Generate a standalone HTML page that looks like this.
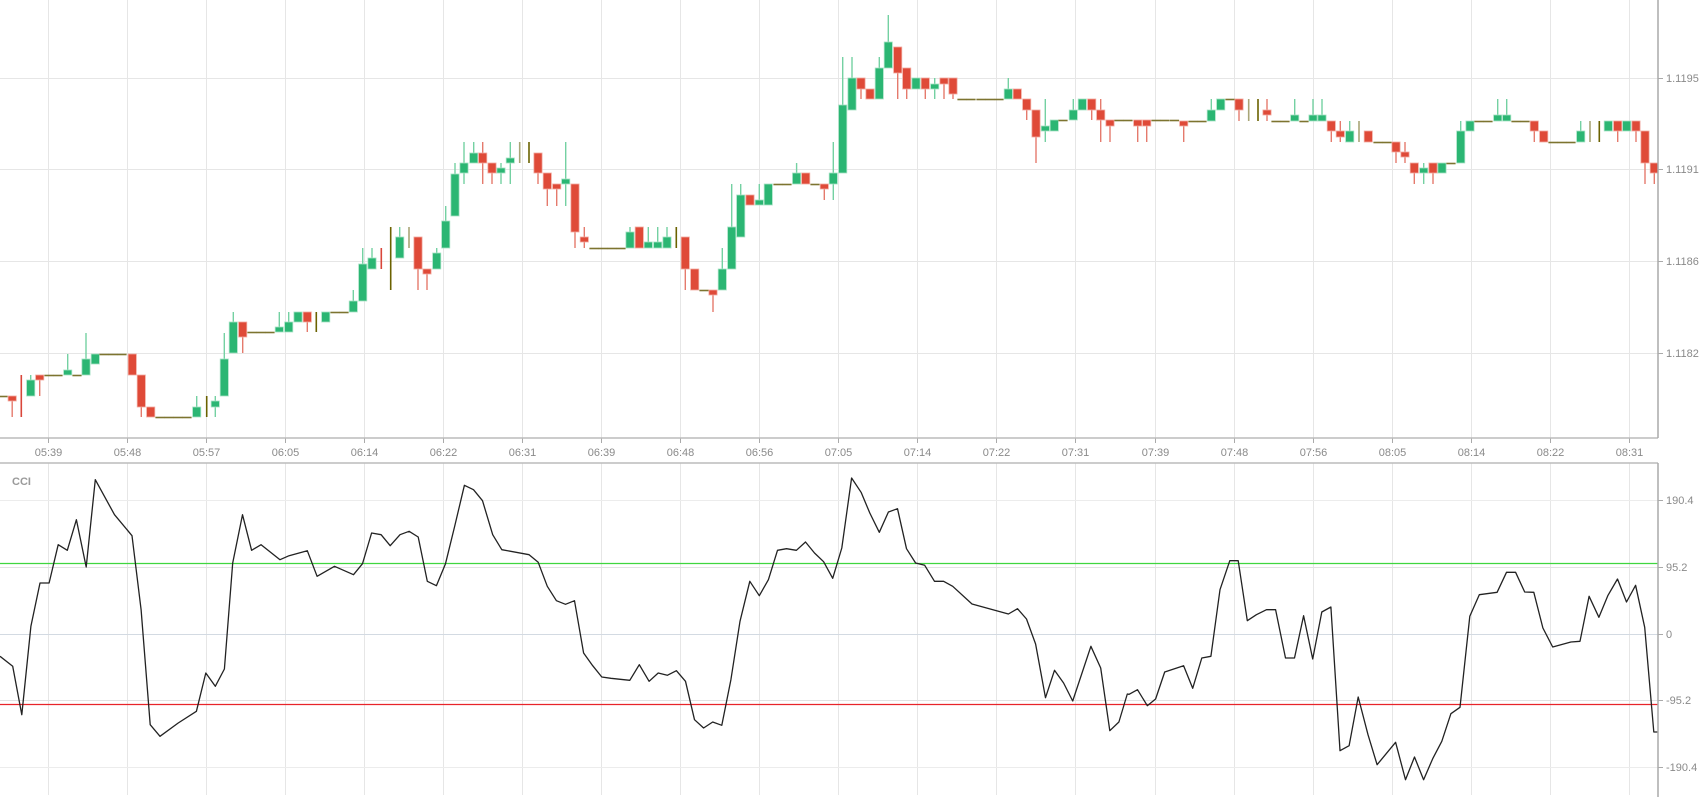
<!DOCTYPE html>
<html><head><meta charset="utf-8">
<style>
html,body{margin:0;padding:0;background:#fff;width:1705px;height:800px;overflow:hidden}
svg{display:block}
text{font-family:"Liberation Sans",sans-serif;font-size:11px;fill:#8a8a8a}
</style></head>
<body>
<svg id="s" width="1705" height="800" xmlns="http://www.w3.org/2000/svg">
<defs>
<clipPath id="cp"><rect x="0" y="0" width="1658" height="438"/></clipPath>
<clipPath id="cc"><rect x="0" y="463" width="1658" height="337"/></clipPath>
</defs>
<g id="grid"></g>
<g id="candles" clip-path="url(#cp)"></g>
<g id="cci" clip-path="url(#cc)"></g>
<g id="axes"></g>
</svg>
<script>
var NS="http://www.w3.org/2000/svg";
function el(p,t,a,txt){var e=document.createElementNS(NS,t);for(var k in a)e.setAttribute(k,a[k]);if(txt!==undefined)e.textContent=txt;document.getElementById(p).appendChild(e);return e;}
// grid
var times=["05:39","05:48","05:57","06:05","06:14","06:22","06:31","06:39","06:48","06:56","07:05","07:14","07:22","07:31","07:39","07:48","07:56","08:05","08:14","08:22","08:31"];
for(var k=0;k<times.length;k++){var gx=Math.round(47.7+79.06*k)+0.5;
 el("grid","line",{x1:gx,y1:0,x2:gx,y2:438,stroke:"#e6e6e6","stroke-width":1});
 el("grid","line",{x1:gx,y1:463,x2:gx,y2:795,stroke:"#e6e6e6","stroke-width":1});
 el("axes","line",{x1:gx,y1:438,x2:gx,y2:443,stroke:"#aaa","stroke-width":1});
 el("axes","text",{x:gx,y:456,"text-anchor":"middle"},times[k]);}
var pl=[[78,"1.1195"],[169,"1.1191"],[261,"1.1186"],[353,"1.1182"]];
pl.forEach(function(p){var y=p[0]+0.5;el("grid","line",{x1:0,y1:y,x2:1658,y2:y,stroke:"#e6e6e6"});
 el("axes","line",{x1:1658,y1:y,x2:1663,y2:y,stroke:"#aaa"});
 el("axes","text",{x:1666,y:p[0]+4},p[1]);});
var cl=[[500,"190.4","#ececec"],[567,"95.2","#e2e2e2"],[634,"0","#d3dae2"],[700,"-95.2","#e2e2e2"],[767,"-190.4","#ececec"]];
cl.forEach(function(p){var y=p[0]+0.5;el("grid","line",{x1:0,y1:y,x2:1658,y2:y,stroke:p[2]});
 el("axes","line",{x1:1658,y1:y,x2:1663,y2:y,stroke:"#aaa"});
 el("axes","text",{x:1666,y:p[0]+4},p[1]);});
el("grid","line",{x1:0,y1:563.5,x2:1658,y2:563.5,stroke:"#3fd63f","stroke-width":1.2});
el("grid","line",{x1:0,y1:704.5,x2:1658,y2:704.5,stroke:"#e8242a","stroke-width":1.2});
// axes
el("axes","line",{x1:0,y1:438,x2:1658,y2:438,stroke:"#bbb","stroke-width":1.5});
el("axes","line",{x1:0,y1:463,x2:1658,y2:463,stroke:"#bbb","stroke-width":1.5});
el("axes","line",{x1:1658,y1:0,x2:1658,y2:438,stroke:"#aaa","stroke-width":1.5});
el("axes","line",{x1:1658,y1:463,x2:1658,y2:797,stroke:"#aaa","stroke-width":1.5});
el("axes","text",{x:12,y:485,"font-weight":"bold",style:"font-weight:bold;fill:#9a9a9a"},"CCI");
// candles
var D=[
["f",3,396],["r",12.2,396,401,396,417],["rl",21.3,375,417],["g",30.7,380,396,375,396],["r",39.7,375,380,375,396],
["f",49,375],["f",58,375],["g",67.7,370,375,354,375],["f",77,375],["g",86,359,375,333,375],["g",95.3,354,364,354,364],
["f",104,354],["f",113,354],["f",122,354],["r",132.3,354,375,354,375],["r",141.3,375,407,375,417],["r",150.7,407,417,407,417],
["f",160,417],["f",169,417],["f",178,417],["f",187,417],["g",196.7,407,417,396,417],["d",206.7,396,417],["g",215.3,401,407,396,417],
["g",224.3,359,396,333,396],["g",233.3,322,353,312,353],["r",242.7,322,337,322,353],["f",252,332],["f",261,332],["f",270,332],
["g",279.3,327,332,312,332],["g",288.7,322,332,312,332],["g",298,312,322,312,322],["r",307.3,312,322,312,332],["d",316.3,312,332],
["g",325.7,312,322,312,322],["f",335,312],["f",344,312],["g",353.3,301,312,290,312],["g",362.7,264,301,248,301],["g",372,258,269,248,269],
["rl",381.3,248,269],["d",390.7,227,290],["g",399.7,237,258,227,258],["t",409,227,248],["r",418,237,269,237,290],["r",427,269,274,269,290],
["g",436.7,253,269,248,269],["g",445.7,221,248,206,248],["g",455,174,216,163,216],["g",464,163,173,142,184],["g",473.7,153,163,142,163],
["r",482.7,153,163,142,184],["r",492,163,173,163,184],["g",501,168,173,163,184],["g",510.3,158,163,142,184],["t",519.7,142,163],["d",529,142,163],
["r",538,153,173,153,184],["r",547.3,173,189,173,206],["r",556.7,184,189,184,206],["g",565.7,179,184,142,206],["r",575,184,232,184,248],
["r",584.3,237,242,227,248],["f",594,248],["f",603,248],["f",612,248],["f",621,248],["g",630,232,248,227,248],["r",639.3,227,248,227,248],
["g",648.3,242,248,227,248],["g",657.7,242,248,227,248],["g",667,237,248,227,248],["d",676.3,227,248],["r",685.3,237,269,237,290],
["r",694.7,269,290,269,290],["f",704,290],["r",713,290,295,290,312],["g",722.3,269,290,248,290],["g",731.7,227,269,184,269],
["g",740.7,195,237,184,237],["r",750,195,205,195,205],["g",759.3,200,205,184,205],["g",768.3,184,205,184,205],["f",778,184],["f",787,184],
["g",796.6,173,184,163,184],["r",805.7,173,184,173,184],["f",815,184],["r",824.3,184,189,184,200],["g",833.3,173,184,142,200],
["g",842.7,105,173,57,173],["g",852,78,110,57,110],["r",861,78,89,78,99],["r",870,89,99,89,99],["g",879.3,68,99,57,99],["g",888.3,42,68,15,68],
["r",897.7,47,73,47,99],["r",906.7,68,89,68,99],["g",916,78,89,78,89],["r",925.3,78,89,78,99],["g",934.7,84,89,78,99],["r",944,78,84,78,99],
["r",953,78,94,78,99],["f",962,99],["f",971,99],["f",981,99],["f",990,99],["f",999,99],["g",1008.3,89,99,78,99],["r",1017.3,89,99,89,99],
["r",1026.7,99,110,99,120],["r",1036,110,137,110,163],["g",1045.3,126,131,99,142],["g",1054.3,120,131,120,131],["f",1063,120],
["g",1073.3,110,120,99,120],["g",1082.3,99,110,99,110],["r",1091.7,99,110,99,120],["r",1100.7,110,120,99,142],["r",1110,120,126,120,142],
["f",1119,120],["f",1128,120],["r",1137.7,120,126,120,142],["r",1146.7,120,126,120,142],["f",1156,120],["f",1165,120],["f",1174.5,120],
["r",1183.7,121,126,121,142],["f",1193,121],["f",1202,121],["g",1211.3,110,121,99,121],["g",1220.7,99,110,99,110],["f",1230,99],
["r",1239,99,110,99,121],["t",1248.7,99,121],["d",1258,99,121],["r",1267,110,115,99,121],["f",1276,121],["f",1285,121],
["g",1294.7,115,121,99,121],["f",1304,121],["g",1313,115,121,99,121],["g",1322,115,121,99,121],["r",1331.3,121,131,121,142],
["r",1340.3,131,137,121,142],["g",1349.7,131,142,121,142],["t",1359,121,142],["r",1368.3,131,142,131,142],["f",1378,142],["f",1387,142],
["r",1396,142,152,142,163],["r",1405,152,157,142,163],["r",1414.3,163,173,163,184],["g",1423.7,168,173,163,184],["r",1433,163,173,163,184],
["g",1442,163,173,163,173],["f",1451,163],["g",1460.7,131,163,121,163],["g",1470,121,131,121,131],["f",1479,121],["f",1488,121],
["g",1497.7,115,121,99,121],["g",1506.7,115,121,99,121],["f",1516,121],["f",1525,121],["r",1534.3,121,131,121,142],["r",1543.7,131,142,131,142],
["f",1553,142],["f",1562,142],["f",1571,142],["g",1580.7,131,142,121,142],["t",1590,121,142],["d",1599.3,121,142],["g",1608.3,121,131,121,131],
["r",1617.7,121,131,121,142],["g",1626.7,121,131,121,131],["r",1636,121,131,121,142],["r",1645,131,163,131,184],["r",1654.3,163,173,163,184]
];
D.forEach(function(c){var t=c[0],x=c[1];
 if(t=="f"){el("candles","line",{x1:x-4.6,y1:c[2]+0.5,x2:x+4.6,y2:c[2]+0.5,stroke:"#7d7430","stroke-width":1.6});return;}
 if(t=="d"||t=="t"||t=="rl"){var col=t=="d"?"#6b6200":(t=="t"?"#a9a577":"#d9463a");
  el("candles","line",{x1:x,y1:c[2],x2:x,y2:c[3],stroke:col,"stroke-width":1.6});return;}
 var g=t=="g";
 el("candles","line",{x1:x,y1:c[4],x2:x,y2:c[5],stroke:g?"#74d1a2":"#e57a6d","stroke-width":1.4});
 var h=Math.max(c[3]-c[2],3);
 el("candles","rect",{x:x-4.1,y:c[2],width:8.2,height:h,fill:g?"#2bb673":"#df4a38",stroke:g?"#a6e2c4":"#f2aaa0","stroke-width":0.8});
});
// CCI
var Z=[
[0,[[0,580],[35,610],[60,755],[85,490],[110,360],[135,360],[160,245],[185,262],[210,170],[237,312],[262,50],[315,155],[363,218],[388,440],[413,785],[440,820],[490,780],[540,745],[566,630],[592,670],[617,618],[640,300],[667,155],[692,262],[718,245],[770,290],[795,278],[845,263],[872,340],[920,310],[972,335],[997,302],[1022,210],[1048,215],[1073,248],[1100,215],[1125,205],[1150,222],[1175,355],[1200,368],[1225,302],[1250,192],[1277,67],[1302,80],[1327,113],[1355,215],[1380,260],[1455,275],[1480,298],[1505,370],[1530,413],[1555,424]]],
[560,[[15,424],[40,413],[65,570],[90,608],[115,642],[140,646],[192,652],[218,605],[245,655],[270,630],[295,637],[320,623],[345,655],[370,770],[395,795],[420,777],[445,787],[470,650],[495,475],[522,355],[548,398],[573,350],[598,262],[623,257],[650,262],[675,237],[700,270],[725,296],[750,346],[775,255],[802,45],[828,88],[852,150],[878,208],[903,147],[928,137],[953,257],[978,300],[1003,307],[1030,355],[1055,355],[1080,370],[1133,423],[1233,453],[1258,437],[1283,468],[1308,543],[1335,704],[1360,622],[1385,660],[1410,714],[1460,550],[1487,615],[1512,803],[1537,777],[1560,693]]],
[1120,[[25,694],[48,680],[75,728],[98,708],[123,627],[175,608],[200,676],[225,585],[250,580],[275,380],[302,293],[325,293],[350,473],[375,455],[403,440],[428,440],[455,585],[480,585],[505,458],[530,588],[555,447],[580,432],[605,863],[630,848],[655,702],[682,815],[707,905],[732,872],[758,838],[785,950],[810,882],[835,950],[860,887],[885,835],[910,752],[935,733],[962,460],[988,395],[1037,388],[1063,328],[1088,328],[1113,387],[1138,388],[1163,495],[1190,552],[1240,537],[1265,535],[1290,400],[1317,463],[1342,397],[1368,348],[1393,417],[1418,367],[1443,493],[1468,807],[1480,807]]]
];
var pts=[];Z.forEach(function(z){z[1].forEach(function(p){pts.push((z[0]+p[0]/2.75).toFixed(1)+","+(463+p[1]/3).toFixed(1));});});
el("cci","polyline",{points:pts.join(" "),fill:"none",stroke:"#222","stroke-width":1.3,"stroke-linejoin":"round"});
</script>
</body></html>
